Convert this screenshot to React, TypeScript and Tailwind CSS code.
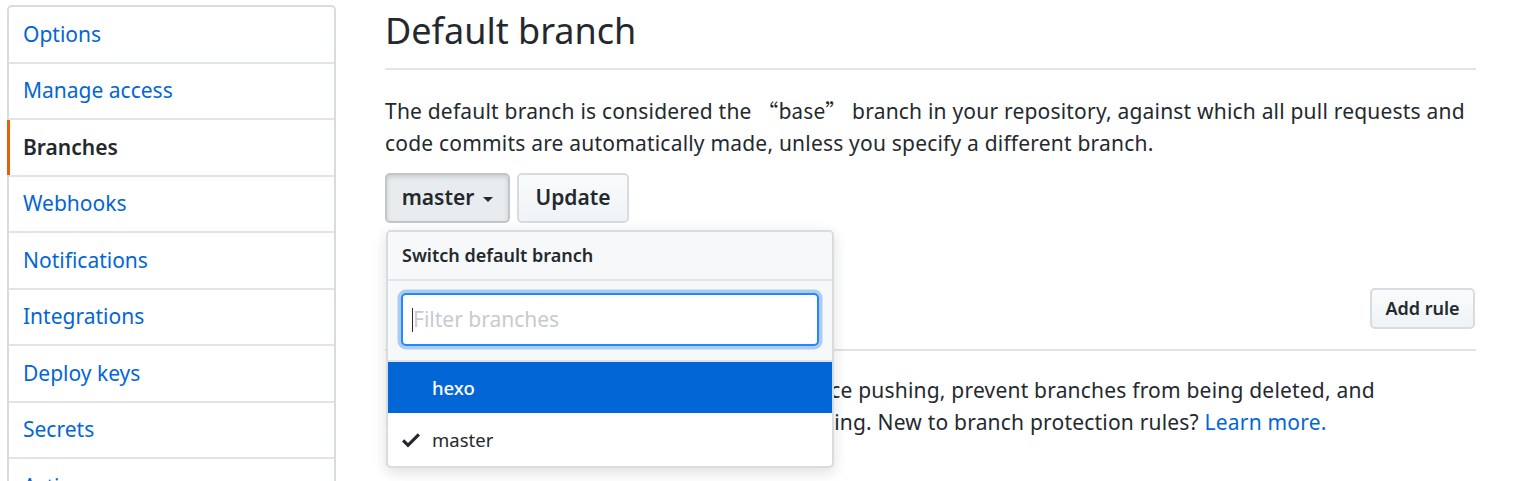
const font = { fontFamily: "'Noto Sans', 'Noto Sans CJK SC', sans-serif" };

const menuItems = [
  'Options',
  'Manage access',
  'Branches',
  'Webhooks',
  'Notifications',
  'Integrations',
  'Deploy keys',
  'Secrets',
  'Actions',
];

const Sidebar = () => (
  <nav className="w-[329px] shrink-0 rounded-t-[5px] border-2 border-b-0 border-[#d8dbdf] bg-white">
    {menuItems.map((label) => {
      const active = label === 'Branches';
      return (
        <div
          key={label}
          className={`relative flex h-[56.5px] items-center border-b-2 border-[#e1e4e8] pl-[14px] text-[21px] ${
            active ? 'font-semibold text-[#24292e]' : 'text-[#0366d6]'
          }`}
        >
          {active && <span className="absolute -left-[2px] top-0 bottom-0 w-[3px] bg-[#e36209]" />}
          {label}
        </div>
      );
    })}
  </nav>
);

// octicon "check"
const CheckIcon = () => (
  <svg viewBox="0 0 12 16" className="mr-[12px] h-[24px] w-[18px]" fill="#24292e">
    <path d="M12 5l-8 8-4-4 1.5-1.5L4 10l6.5-6.5L12 5z" />
  </svg>
);

const BranchDropdown = () => (
  <div className="absolute left-[1px] top-[57px] z-10 w-[448px] overflow-hidden rounded-[5px] border-2 border-[#d8dbdf] bg-white shadow-[0_4px_14px_rgba(27,31,35,0.15)]">
    <div className="flex h-[49px] items-center border-b-2 border-[#e1e4e8] bg-[#f6f8fa] pl-[14px] text-[18px] font-semibold text-[#24292e]">
      Switch default branch
    </div>
    <div className="border-b-2 border-[#e1e4e8] bg-[#f6f8fa] px-[13px] pt-[12px] pb-[14px]">
      <div className="flex h-[53px] items-center rounded-[5px] border-2 border-[#2188ff] bg-white pl-[9px] shadow-[0_0_0_3.5px_rgba(3,102,214,0.3)]">
        <span className="h-[24px] w-px bg-[#24292e]" />
        <span className="text-[21px] text-[#c6cbd1]">Filter branches</span>
      </div>
    </div>
    <div className="flex h-[51px] items-center bg-[#0366d6] pl-[44px] text-[18.5px] font-medium text-white">hexo</div>
    <div className="flex h-[53px] items-center pl-[14px] text-[18.5px] text-[#24292e]">
      <CheckIcon />
      master
    </div>
  </div>
);

const Button = ({ children, pressed = false, className = '' }: { children: React.ReactNode; pressed?: boolean; className?: string }) => (
  <div
    className={`flex items-center justify-center rounded-[5px] border-2 font-semibold text-[#24292e] ${
      pressed
        ? 'border-[#c3c6c9] bg-[#e9ecef] shadow-[inset_0_2px_4px_rgba(27,31,35,0.15)]'
        : 'border-[#d8dbdf] bg-gradient-to-b from-[#fafbfc] to-[#eff3f6]'
    } ${className}`}
  >
    {children}
  </div>
);

export default function App() {
  return (
    <div className="flex h-[481px] gap-[49px] overflow-hidden bg-white pl-[7px] pt-[5px] text-[#24292e]" style={font}>
      <Sidebar />
      <main className="-mt-[5px] w-[1091px] shrink-0">
        <div className="flex h-[70px] items-center border-b-2 border-[#e1e4e8] pb-[6px] text-[36px] leading-none">
          Default branch
        </div>
        <p className="mt-[25px] text-[21px] leading-[31.5px] tracking-[0.2px]">
          The default branch is considered the{' '}
          <span style={{ fontFamily: "'Noto Sans CJK SC', sans-serif" }}>“base”</span> branch in your repository, against
          which all pull requests and
          <br />
          code commits are automatically made, unless you specify a different branch.
        </p>
        <div className="relative mt-[14px] flex gap-[7px] text-[21px]">
          <Button pressed className="h-[50px] w-[125px] gap-[9px]">
            master
            <span className="mt-[2px] h-0 w-0 border-x-[5px] border-t-[5px] border-x-transparent border-t-[#24292e]" />
          </Button>
          <Button className="h-[50px] w-[112px]">Update</Button>
          <BranchDropdown />
        </div>
        <div className="mt-[65px] flex h-[63px] items-start justify-between border-b-2 border-[#e1e4e8]">
          <div className="text-[36px] leading-[44px]">Branch protection rules</div>
          <Button className="mr-[1px] h-[41px] w-[105px] text-[18px]">Add rule</Button>
        </div>
        <p className="mt-[24px] text-[21px] leading-[31.5px] tracking-[0.2px]">
          Define branch protection rules to disable force pushing, prevent branches from being deleted, and
          <br />
          optionally require status checks before merging. New to branch protection rules?{' '}
          <span className="text-[#0366d6]">Learn more.</span>
        </p>
      </main>
    </div>
  );
}
